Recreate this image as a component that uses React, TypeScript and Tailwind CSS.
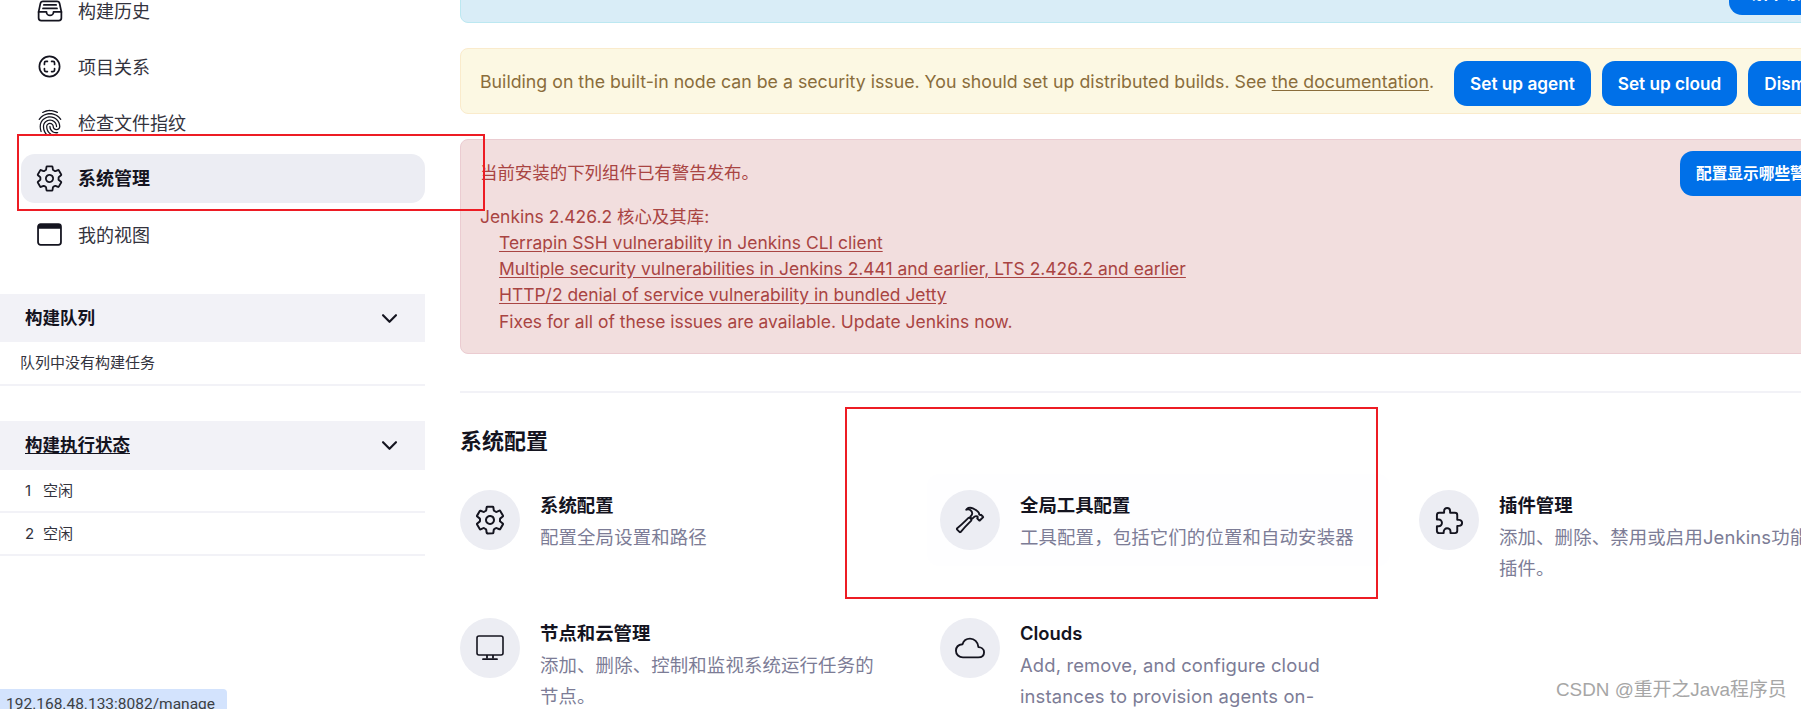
import type { ReactNode } from "react";
import {
  IoChevronDownOutline,
  IoCloudOutline,
  IoExtensionPuzzleOutline,
  IoFileTrayFullOutline,
  IoFingerPrintOutline,
  IoHammerOutline,
  IoScanCircleOutline,
  IoSettingsOutline,
} from "react-icons/io5";

function WindowIcon() {
  return (
    <svg viewBox="0 0 24 24" className="h-[25px] w-[25px] shrink-0" fill="none">
      <rect x="1" y="2" width="22" height="20" rx="2.5" stroke="#14141f" strokeWidth="1.7" />
      <path d="M1 6.5V4.5A2.5 2.5 0 0 1 3.5 2h17A2.5 2.5 0 0 1 23 4.5v2z" fill="#14141f" />
    </svg>
  );
}

function MonitorIcon() {
  return (
    <svg viewBox="0 0 28 28" className="h-[28px] w-[28px]" fill="none" stroke="#14141f" strokeWidth="1.6" strokeLinejoin="round">
      <rect x="1" y="2" width="26" height="19" rx="2" />
      <path d="M11 21v3.5M17 21v3.5" strokeWidth="1.8" />
      <path d="M7 25.2h14" strokeWidth="1.8" strokeLinecap="round" />
    </svg>
  );
}

const navItems = [
  { label: "构建历史", icon: <IoFileTrayFullOutline size={28} className="shrink-0" /> },
  { label: "项目关系", icon: <IoScanCircleOutline size={27} className="shrink-0" /> },
  { label: "检查文件指纹", icon: <IoFingerPrintOutline size={28} className="shrink-0" /> },
  { label: "系统管理", icon: <IoSettingsOutline size={29} className="shrink-0" />, active: true },
  { label: "我的视图", icon: <WindowIcon /> },
];

const cards = [
  { title: "系统配置", desc: "配置全局设置和路径", icon: <IoSettingsOutline size={32} /> },
  { title: "全局工具配置", desc: "工具配置，包括它们的位置和自动安装器", icon: <IoHammerOutline size={30} />, hover: true },
  { title: "插件管理", desc: "添加、删除、禁用或启用Jenkins功能的插件。", icon: <IoExtensionPuzzleOutline size={31} /> },
  { title: "节点和云管理", desc: "添加、删除、控制和监视系统运行任务的节点。", icon: <MonitorIcon /> },
  { title: "Clouds", desc: "Add, remove, and configure cloud instances to provision agents on-demand.", icon: <IoCloudOutline size={30} /> },
];

function PaneHeader({ children, underline, tall }: { children: ReactNode; underline?: boolean; tall?: boolean }) {
  return (
    <div className={`flex items-center justify-between bg-[#f2f2f7] pl-[25px] pr-[24px] text-[17.5px] font-bold text-[#14141f] ${tall ? "h-[49px]" : "h-[48px]"}`}>
      <span className={underline ? "underline underline-offset-2" : ""}>{children}</span>
      <IoChevronDownOutline size={23} />
    </div>
  );
}

function PrimaryButton({ children }: { children: ReactNode }) {
  return (
    <button className="flex h-[45px] shrink-0 items-center rounded-[13px] bg-[#0070e8] px-[16px] text-[17.2px] font-semibold whitespace-nowrap text-white">
      {children}
    </button>
  );
}

export default function App() {
  return (
    <div className="relative flex h-[709px] w-[1801px] overflow-hidden bg-white font-['Inter','Noto_Sans_CJK_SC',sans-serif] text-[#14141f]">
      <aside className="w-[425px] shrink-0">
        <nav className="-mt-[14px] flex flex-col gap-[7px] pl-[21px]">
          {navItems.map((item) => (
            <div
              key={item.label}
              className={`flex h-[49px] items-center gap-[16px] rounded-[14px] pl-[16px] text-[18px] ${
                item.active ? "bg-[#ecedf3] font-bold" : "text-[#33333d]"
              }`}
            >
              <span className="flex w-[25px] justify-center text-[#14141f]">{item.icon}</span>
              <span className={item.active ? "" : "pt-[2px]"}>{item.label}</span>
            </div>
          ))}
        </nav>

        <section className="mt-[35px]">
          <PaneHeader>构建队列</PaneHeader>
          <div className="flex h-[44px] items-center border-b-2 border-[#f2f2f7] pl-[20px] text-[15px] text-[#33333d]">
            队列中没有构建任务
          </div>
        </section>

        <section className="mt-[35px]">
          <PaneHeader underline tall>构建执行状态</PaneHeader>
          {["1", "2"].map((n) => (
            <div key={n} className="flex h-[43px] items-center gap-[10px] border-b-2 border-[#f2f2f7] pt-[1px] pl-[25px] text-[15px] text-[#33333d]">
              <span className="w-[8px]">{n}</span>
              空闲
            </div>
          ))}
        </section>
      </aside>

      <main className="ml-[35px] w-[1400px] shrink-0">
        <div className="-mt-[60px] flex h-[83px] items-end rounded-[8px] border border-[#bce8f1] bg-[#d9edf7] pb-[7px] pl-[272px]">
          <div className="mb-[60px] flex gap-[12px]">
            <span className="h-[2px] w-[34px] bg-[#31708f]" />
            <span className="h-[2px] w-[69px] bg-[#31708f]" />
          </div>
          <div className="ml-auto w-[130px]">
            <PrimaryButton>或自动升级</PrimaryButton>
          </div>
        </div>

        <div className="mt-[25px] flex h-[66px] items-start rounded-[8px] border border-[#faebcc] bg-[#fcf8e3] pl-[19px] text-[17.75px] text-[#8a6d3b]">
          <p className="mt-[20px] whitespace-nowrap">
            Building on the built-in node can be a security issue. You should set up distributed builds. See{" "}
            <a className="underline underline-offset-2">the documentation</a>.
          </p>
          <div className="mt-[12px] ml-[20px] flex gap-[11px]">
            <PrimaryButton>Set up agent</PrimaryButton>
            <PrimaryButton>Set up cloud</PrimaryButton>
            <PrimaryButton>Dismiss</PrimaryButton>
          </div>
        </div>

        <div className="mt-[25px] flex h-[215px] items-start rounded-[8px] border border-[#ebccd1] bg-[#f2dede] pl-[19px] text-[17.45px] text-[#a94442]">
          <div className="w-[1200px] pt-[20px]">
            <p className="leading-[26px]">当前安装的下列组件已有警告发布。</p>
            <p className="mt-[18px] leading-[26px]">Jenkins 2.426.2 核心及其库:</p>
            <ul className="pl-[19px] leading-[26px]">
              <li><a className="underline underline-offset-2">Terrapin SSH vulnerability in Jenkins CLI client</a></li>
              <li><a className="underline underline-offset-2">Multiple security vulnerabilities in Jenkins 2.441 and earlier, LTS 2.426.2 and earlier</a></li>
              <li><a className="underline underline-offset-2">HTTP/2 denial of service vulnerability in bundled Jetty</a></li>
              <li className="mt-[1px]">Fixes for all of these issues are available. Update Jenkins now.</li>
            </ul>
          </div>
          <div className="mt-[11px]">
            <PrimaryButton><span className="text-[15.7px] font-bold">配置显示哪些警告</span></PrimaryButton>
          </div>
        </div>

        <hr className="mt-[37px] border-t-2 border-[#f2f2f7]" />

        <h2 className="mt-[33px] text-[22px] leading-[30px] font-semibold">系统配置</h2>

        <div className="mt-[34px] grid grid-cols-[480px_479px_480px] gap-y-[68px]">
          {cards.map((card) => (
            <div
              key={card.title}
              className={`flex h-[60px] gap-[20px] ${card.hover ? "relative before:absolute before:-inset-y-[16px] before:-left-[13px] before:right-[29px] before:rounded-[12px] before:bg-[#fefeff]" : ""}`}
            >
              <div className="relative flex h-[60px] w-[60px] shrink-0 items-center justify-center rounded-full bg-[#ecedf3]">
                {card.icon}
              </div>
              <div className="relative w-[340px]">
                <h3 className="mt-[1.5px] text-[18.4px] leading-[26px] font-semibold">{card.title}</h3>
                <p className="mt-[4.5px] text-[18.4px] leading-[30.5px] tracking-[0.15px] text-[#7c7c96]">{card.desc}</p>
              </div>
            </div>
          ))}
        </div>
      </main>

      <div className="pointer-events-none absolute top-[134px] left-[17px] h-[77px] w-[468px] border-2 border-[#ed1c24]" />
      <div className="pointer-events-none absolute top-[407px] left-[845px] h-[192px] w-[533px] border-2 border-[#ed1c24]" />

      <div className="absolute bottom-0 left-0 h-[20px] w-[227px] overflow-hidden rounded-tr-[4px] bg-[#d3e3fd] pt-[4px] pl-[6px] font-['Roboto',sans-serif] text-[15.5px] leading-[22px] whitespace-nowrap text-[#3c4043]">
        192.168.48.133:8082/manage
      </div>

      <div className="absolute top-[678px] left-[1556px] font-['Liberation_Sans','Noto_Sans_CJK_SC',sans-serif] text-[18.85px] leading-[24px] whitespace-nowrap text-[#a6a6a6]">
        CSDN @重开之Java程序员
      </div>
    </div>
  );
}
